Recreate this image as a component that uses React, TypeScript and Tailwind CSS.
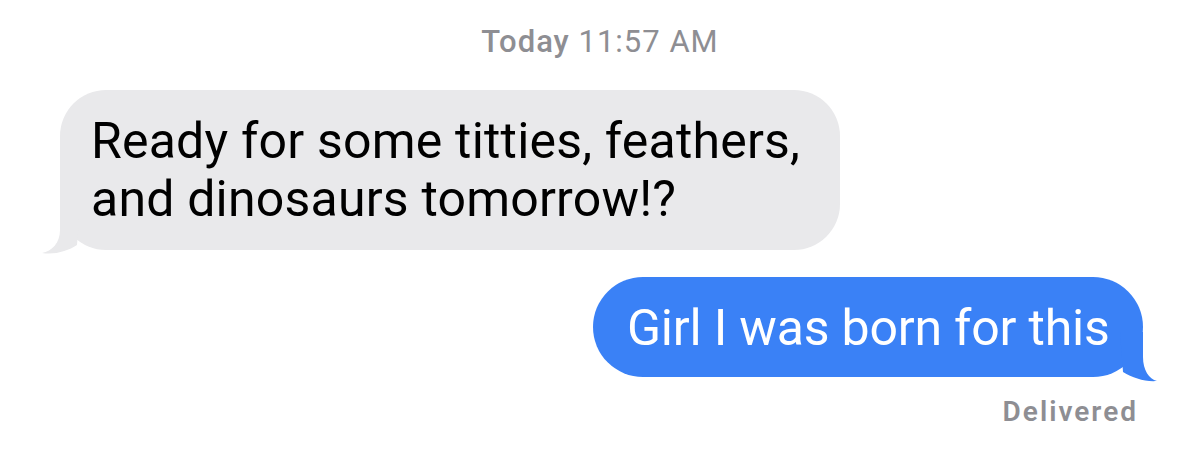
import React from "react";

export default function App() {
  return (
    <div
      className="w-[1200px] h-[465px] bg-white overflow-hidden flex flex-col"
      style={{ fontFamily: "Roboto, 'Noto Sans', sans-serif" }}
    >
      <div className="pt-[24px] h-[90px] text-center text-[31px] leading-[36px] tracking-[1px] text-[#8e8e93]">
        <span className="font-medium">Today</span> 11:57 AM
      </div>
      <div className="pl-[60px] flex">
        <div className="relative w-[780px] h-[160px] bg-[#e9e9eb] rounded-[46px] pl-[31px] py-[22px] text-[50px] leading-[58px] tracking-[0.2px] text-black">
          <svg
            className="absolute left-[-20px] bottom-[-5px]"
            width="45"
            height="55"
            viewBox="0 0 45 55"
          >
            <path
              d="M20 5 L20 30 C20 43 12 51 2 53 C15 55 28 51 37 45 L40 5 Z"
              fill="#e9e9eb"
            />
          </svg>
          <div className="relative whitespace-nowrap">Ready for some titties, feathers,</div>
          <div className="relative whitespace-nowrap">and dinosaurs tomorrow!?</div>
        </div>
      </div>
      <div className="mt-[27px] pr-[57px] flex justify-end">
        <div className="relative w-[550px] h-[100px] bg-[#3a81f6] rounded-[50px] pl-[34px] pt-[22px] text-[50px] leading-[58px] tracking-[-0.2px] text-white">
          <svg
            className="absolute right-[-20px] bottom-[-5px]"
            width="45"
            height="55"
            viewBox="0 0 45 55"
          >
            <path
              d="M25 5 L25 30 C25 43 31 52 39 54 C27 55 15 51 5 45 L2 5 Z"
              fill="#3a81f6"
            />
          </svg>
          <div className="relative whitespace-nowrap">Girl I was born for this</div>
        </div>
      </div>
      <div className="mt-[20px] pr-[62px] text-right text-[28px] leading-[30px] font-semibold tracking-[2px] text-[#8e8e93]">
        Delivered
      </div>
    </div>
  );
}
